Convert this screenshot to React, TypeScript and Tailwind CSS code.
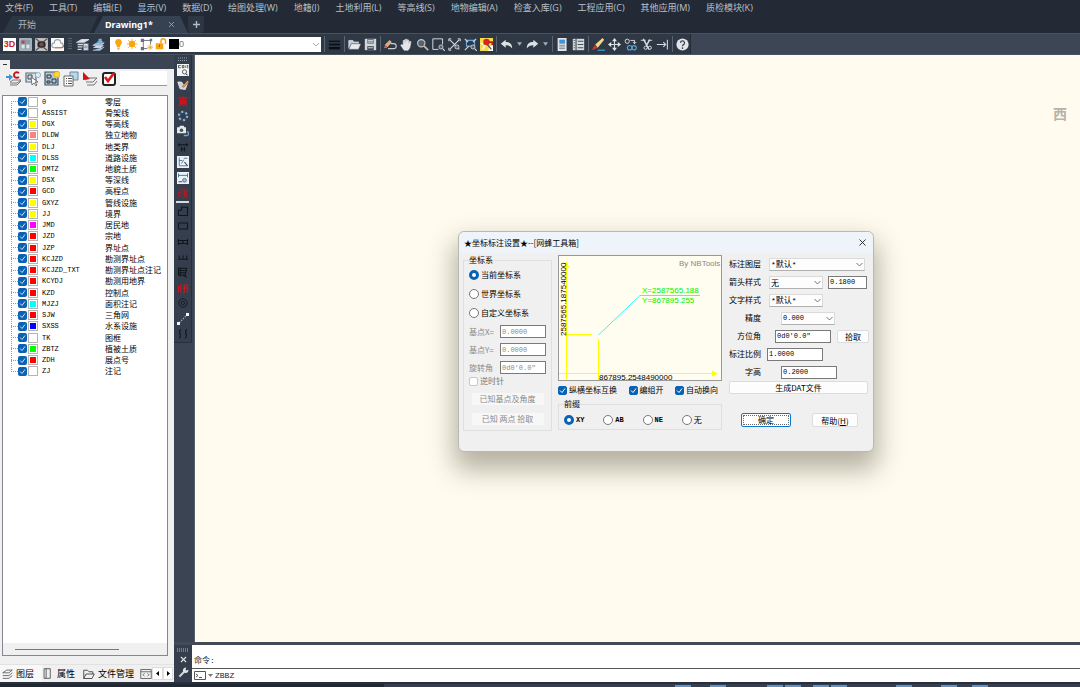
import type { ReactNode } from 'react'
import { X } from 'lucide-react'

const menus = [
  '文件(F)', '工具(T)', '编辑(E)', '显示(V)', '数据(D)', '绘图处理(W)', '地籍(J)',
  '土地利用(L)', '等高线(S)', '地物编辑(A)', '检查入库(G)', '工程应用(C)', '其他应用(M)', '质检模块(K)',
]

const layers = [
  { code: '0', name: '零层', color: '#ffffff' },
  { code: 'ASSIST', name: '骨架线', color: '#ffffff' },
  { code: 'DGX', name: '等高线', color: '#ffff00' },
  { code: 'DLDW', name: '独立地物', color: '#ff7f7f' },
  { code: 'DLJ', name: '地类界', color: '#ffff00' },
  { code: 'DLSS', name: '道路设施', color: '#00ffff' },
  { code: 'DMTZ', name: '地貌土质', color: '#00ff00' },
  { code: 'DSX', name: '等深线', color: '#ffff00' },
  { code: 'GCD', name: '高程点', color: '#ff0000' },
  { code: 'GXYZ', name: '管线设施', color: '#ffff00' },
  { code: 'JJ', name: '境界', color: '#ffff00' },
  { code: 'JMD', name: '居民地', color: '#ff00ff' },
  { code: 'JZD', name: '宗地', color: '#ff0000' },
  { code: 'JZP', name: '界址点', color: '#ff0000' },
  { code: 'KCJZD', name: '勘测界址点', color: '#ff0000' },
  { code: 'KCJZD_TXT', name: '勘测界址点注记', color: '#ff0000' },
  { code: 'KCYDJ', name: '勘测用地界', color: '#ff0000' },
  { code: 'KZD', name: '控制点', color: '#ff0000' },
  { code: 'MJZJ', name: '面积注记', color: '#00ffff' },
  { code: 'SJW', name: '三角网', color: '#ff0000' },
  { code: 'SXSS', name: '水系设施', color: '#0000ff' },
  { code: 'TK', name: '图框', color: '#ffffff' },
  { code: 'ZBTZ', name: '植被土质', color: '#00ff00' },
  { code: 'ZDH', name: '展点号', color: '#ff0000' },
  { code: 'ZJ', name: '注记', color: '#ffffff' },
]

function Icon({ children, size = 13 }: { children: ReactNode; size?: number }) {
  return (
    <svg width={size} height={size} viewBox="0 0 16 16" fill="none" stroke="#d5dae0" strokeWidth="1.4" className="shrink-0">
      {children}
    </svg>
  )
}

function IconButton({ label, children, size }: { label: string; children: ReactNode; size?: number }) {
  return (
    <button type="button" aria-label={label} className="flex shrink-0 items-center justify-center">
      <Icon size={size}>{children}</Icon>
    </button>
  )
}

function Sep() {
  return <span className="h-4 w-px shrink-0 bg-[#5a6473]" />
}

function Dropdown() {
  return (
    <svg width="5" height="4" viewBox="0 0 6 4" className="mx-px shrink-0">
      <path d="M0 0h6L3 4z" fill="#9fb0c0" />
    </svg>
  )
}

function MenuBar() {
  return (
    <nav className="flex h-4 shrink-0 items-center gap-4 overflow-hidden px-[5px] font-['Open_Sans','Noto_Sans_CJK_SC'] text-[9px] leading-4 text-[#b9c0c9]">
      {menus.map((m) => (
        <button key={m} type="button" className="shrink-0 whitespace-nowrap">{m}</button>
      ))}
    </nav>
  )
}

function TabBar() {
  return (
    <div className="flex h-[17px] shrink-0 items-stretch">
      <button type="button" className="w-[98px] bg-[#2d3744] pl-[18px] text-left text-[9px] leading-4 text-[#aab2bc] [clip-path:polygon(12px_0,100%_0,90px_100%,3px_100%)]">
        开始
      </button>
      <div className="-ml-1 flex w-[94px] items-center justify-between bg-[#364252] pr-3 pl-[11px] [clip-path:polygon(9px_0,86px_0,100%_100%,0_100%)]">
        <button type="button" className="font-['Noto_Sans'] text-[9px] leading-4 font-bold text-white">Drawing1*</button>
        <button type="button" aria-label="关闭"><X size={9} color="#aeb6c0" /></button>
      </div>
      <button type="button" aria-label="新建" className="flex w-4 items-center justify-center rounded-b bg-[#2d3744]">
        <svg width="7" height="7" viewBox="0 0 7 7"><path d="M3.5 0v7M0 3.5h7" stroke="#b5bcc6" strokeWidth="1.4" /></svg>
      </button>
    </div>
  )
}

function Toolbar() {
  return (
    <div className="flex h-[22px] shrink-0 border-y border-[#48525f] bg-[#3c4655]">
      <div className="flex shrink-0 items-center gap-[3px] border-r border-[#252c37] bg-[#2f3845] pr-px pl-[3px]">
        <button type="button" className="h-[13px] w-[13px] bg-white font-['Liberation_Sans'] text-[9px] leading-[13px] font-bold text-[#d21c24]">3D</button>
        <IconButton label="视图">
          <rect x="1" y="1" width="14" height="14" fill="#8b949e" stroke="#cfd4da" />
          <circle cx="5" cy="5" r="2" fill="#b84450" stroke="none" /><circle cx="11" cy="5" r="2" fill="#74a7c8" stroke="none" />
          <path d="M3 8h4v5H3zM9 8h4v5H9z" fill="#dde3e8" stroke="none" />
        </IconButton>
        <IconButton label="影像">
          <rect x="1" y="1" width="14" height="14" fill="#b7b5b5" stroke="#ddd" />
          <rect x="3" y="4" width="10" height="8" rx="3" fill="#2d2a2c" stroke="none" />
          <circle cx="8" cy="8" r="2.6" fill="#7c4a4a" stroke="none" />
          <path d="M1 1l4 3M15 1l-4 3M1 15l4-3M15 15l-4-3" stroke="#555" />
        </IconButton>
        <IconButton label="云">
          <rect width="16" height="16" fill="#fafafa" stroke="none" />
          <path d="M4 12a3 3 0 0 1 0-6 4 4 0 0 1 8 0 3 3 0 0 1 0 6z" stroke="#9aa0a8" />
          <path d="M5 12h8a2 2 0 0 0 2-3" stroke="#df6a3c" />
        </IconButton>
        <svg width="4" height="12" viewBox="0 0 4 12" className="mx-px"><path d="M1 0v12M3 0v12" stroke="#8a939f" strokeDasharray="1 1.5" /></svg>
        <IconButton label="图层特性">
          <path d="M2 5l5-3h8l-5 3zM2 8h7M2 11h6M2 14h5" fill="#e6e9ec" strokeWidth="1.6" />
          <rect x="9" y="7" width="6" height="8" fill="#e8edf2" stroke="#6c7784" strokeWidth="1" />
          <path d="M10 10h4M10 12h4" stroke="#4c6f92" strokeWidth="1" />
        </IconButton>
        <IconButton label="图层工具">
          <path d="M1 12l5-3h9l-5 4z" fill="#cfd4da" stroke="none" />
          <path d="M1 9l5-3h9l-5 4zM1 15l9 0 5-4" fill="#8ebde2" stroke="#d8e4ee" strokeWidth=".8" />
          <path d="M8 1h4v3h2l-4 4-4-4h2z" fill="#79b1dd" stroke="none" />
        </IconButton>
        <div className="relative ml-[2px] h-[15px] w-[211px]">
          <select aria-label="当前图层" className="block h-full w-full appearance-none bg-white pl-[69px] font-['Liberation_Sans'] text-[9px] leading-[15px] text-[#777]">
            <option>0</option>
          </select>
          <div className="pointer-events-none absolute inset-0 flex items-center gap-[2px] pl-[3px]">
            <Icon size={11}>
              <path d="M8 0a5 5 0 0 0-3 9l1 3h4l1-3a5 5 0 0 0-3-9z" fill="#f8a511" stroke="none" />
              <path d="M6 13.500h4M7 15.500h2" stroke="#f5a623" />
            </Icon>
            <Icon size={12}>
              <circle cx="8" cy="8" r="4.200" fill="#f8a511" stroke="none" />
              <path d="M8 1v14M1 8h14M3 3l10 10M13 3L3 13" stroke="#f8a511" strokeWidth="1.200" />
            </Icon>
            <Icon>
              <path d="M4 3h10M4 3v10M4 13h5M13 3v5" stroke="#555d66" strokeWidth="1" />
              <path d="M1 1h4v4H1zM12 1h3v3h-3zM1 11h4v4H1z" fill="#687078" stroke="none" />
              <path d="M12.500 8v7M9 11.500h7M10 9l5 5M15 9l-5 5" stroke="#f8a511" strokeWidth="1" />
            </Icon>
            <Icon size={12}>
              <rect x="1" y="7" width="10" height="8" fill="#f8a511" stroke="none" />
              <path d="M8 7V4a3 3 0 0 1 6 0v4" stroke="#f8a511" strokeWidth="2" />
              <path d="M6 9v3" stroke="#a35c00" />
            </Icon>
            <span className="h-[10px] w-[10px] bg-black" />
          </div>
          <svg width="6" height="4" viewBox="0 0 6 4" className="pointer-events-none absolute top-[6px] right-[2px]"><path d="M0 0l3 3 3-3" stroke="#aaa" fill="none" /></svg>
        </div>
        <Sep />
        <IconButton label="线型"><path d="M1 4h14" stroke="#0c1016" strokeWidth="1.500" /><path d="M1 8h14" stroke="#0c1016" strokeWidth="2.200" /><path d="M1 12.500h14" stroke="#0c1016" strokeWidth="3" /></IconButton>
        <Sep />
        <IconButton label="打开"><path d="M1 13V3h5l1 2h6v2" fill="#c6ccd2" strokeWidth="1" /><path d="M1 14l3-7h12l-3 7z" fill="#e8ebee" stroke="#39424f" strokeWidth=".7" /></IconButton>
        <IconButton label="保存"><path d="M1 1h14v14H1z" fill="#d3d7dc" stroke="none" /><path d="M4 1h8v6H4z" fill="#6a7480" stroke="none" /><path d="M4 10h8v5H4z" fill="#434d5a" stroke="none" /><path d="M5 3h6M5 5h6M5 12h6" stroke="#e6e9ec" strokeWidth="1" /></IconButton>
        <Sep />
        <IconButton label="绘制"><path d="M8 7h4a3 3 0 0 1 0 6H5" stroke="#c8cdd3" /><path d="M1 12l1-4 5-5 2 2-5 6z" fill="#e8a46a" stroke="#f1d9c3" strokeWidth=".8" /><path d="M1 12l1-3 2 2z" fill="#c33" stroke="none" /></IconButton>
        <IconButton label="平移"><path d="M5 15L1 9l1-1 2 1V3l1.500-.5L6.500 7V1.500H8V7l1-5 1.500.4V8L12 4l1.500.5L12 12l-2 3z" fill="#e4e7ea" stroke="#e4e7ea" strokeWidth=".8" /></IconButton>
        <IconButton label="缩放"><circle cx="6.500" cy="6.500" r="4.500" fill="#59636f" stroke="#c3c9d0" /><path d="M10 10l5 5" stroke="#d5b79a" strokeWidth="2" /></IconButton>
        <IconButton label="窗口缩放"><path d="M8 14H1V1h12v7" strokeWidth="1.200" /><circle cx="11" cy="11" r="2.500" fill="#566" strokeWidth="1" /><path d="M13 13l3 3" /></IconButton>
        <IconButton label="范围缩放"><path d="M2 2l12 12M14 2L2 14" /><path d="M1 4V1h3M12 1h3v3M1 12v3h3" strokeWidth="1.200" /><circle cx="11" cy="11" r="2.500" fill="#566" strokeWidth="1" /></IconButton>
        <IconButton label="对象缩放"><path d="M3 3h10v7H3z" stroke="#67a6d6" /><path d="M1 1l4 4M15 1l-4 4M1 15l5-5" /><circle cx="11" cy="11" r="2.500" fill="#566" strokeWidth="1" /><path d="M13 13l3 3" /></IconButton>
        <IconButton label="查询"><path d="M0 0h16v16H0z" fill="#f6dc4a" stroke="none" /><path d="M10 16c1-5 3-7 6-8v8z" fill="#fff" stroke="none" /><path d="M3 14l4-6M1 6l3 2" stroke="#f2f7ff" strokeWidth="2" /><circle cx="8" cy="5" r="4" fill="#d7281e" stroke="none" /><path d="M10 5h5v4" stroke="#c81d1d" strokeWidth="2" /><path d="M9 8l5 6" stroke="#555" strokeWidth="1.600" /></IconButton>
        <Sep />
        <IconButton label="放弃"><path d="M1 7l6-5v3c5 0 8 2 8 8-2-3-4-4-8-4v3z" fill="#dde1e5" stroke="none" /></IconButton>
        <Dropdown />
        <IconButton label="重做"><path d="M15 7L9 2v3C4 5 1 7 1 13c2-3 4-4 8-4v3z" fill="#dde1e5" stroke="none" /></IconButton>
        <Dropdown />
        <Sep />
        <IconButton label="特性"><path d="M2 0h11v16H2z" fill="#dfe5ea" stroke="none" /><path d="M4 2h7v5H4z" fill="#3d96d3" stroke="none" /><path d="M4 9h7M4 11h7M4 13h7" stroke="#6f7c89" strokeWidth="1" /></IconButton>
        <IconButton label="工具选项板"><path d="M1 1h14v14H1z" fill="#d7dce1" stroke="none" /><path d="M5 1v14M7 4h7M7 8h7M7 12h7" stroke="#46505d" /><path d="M2 3h2M2 6h2M2 9h2M2 12h2" stroke="#46505d" strokeWidth="1" /></IconButton>
        <Sep />
        <IconButton label="特性匹配"><path d="M7 15h9" stroke="#48a0dd" /><path d="M0 15l3-6 4 3z" fill="#d8362a" stroke="none" /><path d="M4 8l9-8 2 2-8 10z" fill="#f2d58a" stroke="none" /></IconButton>
        <IconButton label="移动"><path d="M8 2v12M2 8h12" /><path d="M8 0l3 4H5zM8 16l3-4H5zM0 8l4-3v6zM16 8l-4-3v6z" fill="#e4e7ea" stroke="none" /></IconButton>
        <IconButton label="复制"><circle cx="4" cy="4" r="2.600" strokeWidth="1.200" /><path d="M8 3h5v4M11 5l2 2 2-2" strokeWidth="1.200" /><circle cx="7" cy="12" r="2.800" stroke="#56a5da" /><circle cx="12.500" cy="12" r="2.600" stroke="#56a5da" /></IconButton>
        <IconButton label="修剪"><path d="M1 3h6M10 3h5" stroke="#aab1ba" /><path d="M4 1l7 13M12 2L8 9" strokeWidth="1.800" /><circle cx="7" cy="12" r="2" strokeWidth="1.200" /><circle cx="12" cy="12" r="2" strokeWidth="1.200" /></IconButton>
        <IconButton label="延伸"><path d="M1 8h11M14 2v12M9 5l3 3-3 3" strokeWidth="1.300" /></IconButton>
        <Sep />
        <IconButton label="帮助"><circle cx="8" cy="8" r="7.500" fill="#e2e5e9" stroke="none" /><path d="M5.500 6a2.500 2.500 0 1 1 3.700 2.200C8.300 8.700 8 9 8 10M8 11.500v2" stroke="#434d5a" strokeWidth="1.600" /></IconButton>
      </div>
    </div>
  )
}

function Check({ label, className = '', disabled = false }: { label: string; className?: string; disabled?: boolean }) {
  return (
    <label className={`flex items-center gap-[2px] whitespace-nowrap ${className}`}>
      <span className="relative h-[9px] w-[9px] shrink-0">
        <input type="checkbox" defaultChecked={!disabled} disabled={disabled} className="peer block h-[9px] w-[9px] appearance-none rounded-xs border border-[#c8c8c8] bg-white checked:border-[#0a62b4] checked:bg-[#0a62b4]" />
        <svg viewBox="0 0 9 9" className="pointer-events-none absolute inset-0 hidden peer-checked:block"><path d="M2 4.500l2 2 3-4" stroke="#fff" fill="none" /></svg>
      </span>
      {label}
    </label>
  )
}

function LayerTree() {
  return (
    <div className="mr-[6px] ml-[2px] flex min-h-0 flex-1 flex-col border border-[#828790] bg-white">
      <ul className="relative grid h-[281px]">
        <li aria-hidden="true" className="absolute top-[5px] bottom-[5px] left-2 border-l border-dotted border-[#999]" />
        {layers.map((l) => (
          <li key={l.code} className="flex items-center pl-2">
            <span className="w-[7px] border-t border-dotted border-[#999]" />
            <label className="flex flex-1 items-center">
              <span className="relative h-[9px] w-[9px]">
                <input type="checkbox" defaultChecked className="block h-[9px] w-[9px] appearance-none rounded-xs bg-white checked:bg-[#0a62b4]" />
                <svg viewBox="0 0 9 9" className="pointer-events-none absolute inset-0"><path d="M2 4.500l2 2 3-4" stroke="#cfe2f5" fill="none" /></svg>
              </span>
              <span className="ml-px h-[10px] w-[10px] border border-[#b4b4b4] p-px">
                <span className="block h-full w-full" style={{ backgroundColor: l.color }} />
              </span>
              <span className="ml-1 w-[63px] font-['Liberation_Mono'] text-[7px] leading-[10px] font-medium">{l.code}</span>
              <span className="text-[8px] leading-[10px] whitespace-nowrap">{l.name}</span>
            </label>
          </li>
        ))}
      </ul>
      <div className="mt-auto flex h-3 items-center bg-[#f0f0f0] pl-3">
        <span className="h-px w-[104px] bg-[#777]" />
      </div>
    </div>
  )
}

function LayerPanel() {
  return (
    <aside className="flex w-[174px] shrink-0 flex-col bg-[#f0f0f0]">
      <div className="flex h-[14px] items-end bg-[#3a4453]">
        <button type="button" aria-label="收起" className="flex h-[9px] w-[10px] items-center justify-center bg-[#f0f0f0]">
          <span className="h-px w-1 bg-[#333]" />
        </button>
      </div>
      <div className="flex h-[26px] items-start gap-[3px] pt-[2px] pl-[6px]">
        <IconButton label="设为当前" size={16}>
          <path d="M0 5h3V3l4 3-4 4V7H0z" fill="#3e93da" stroke="none" /><path d="M13 2c-3-2-5 0-5 2s2 4 5 2" stroke="#c3161c" strokeWidth="2" />
          <path d="M4 11l3-2h8l-4 3H4M4 14h7l4-4" stroke="#777" strokeWidth="1" fill="#eee" />
        </IconButton>
        <IconButton label="选择图层" size={16}>
          <path d="M1 2h10v9H1z" stroke="#5e6c7a" strokeWidth="1.200" fill="#dce3e8" /><path d="M3 4h4v4H3z" stroke="#345" strokeWidth="1" />
          <path d="M6 6l1 8 2-2 2 3 1-1-2-3h3z" fill="#fff" stroke="#555" strokeWidth=".8" /><circle cx="13" cy="4" r="2.600" fill="#d9ebfb" stroke="#8ba9c4" strokeWidth=".8" />
        </IconButton>
        <IconButton label="显示图层" size={16}>
          <path d="M1 1h13v13H1z" stroke="#456" strokeWidth="1.200" fill="#b9c7ce" /><path d="M3 4h4v3H3zM8 8h4v4H8zM3 10h3v2H3z" stroke="#234" strokeWidth="1" />
          <circle cx="13" cy="3.500" r="3" fill="#ffd83a" stroke="#e0a800" strokeWidth=".7" />
        </IconButton>
        <IconButton label="图层列表" size={16}>
          <path d="M7 1h8v8H7z" stroke="#6b8ba4" strokeWidth="1" fill="#b7d9ee" /><path d="M1 5h9v10H1z" stroke="#666" strokeWidth="1" fill="#fff" /><path d="M3 7.500h1M5 7.500h4M3 10h1M5 10h4M3 12.500h1M5 12.500h4" stroke="#555" strokeWidth="1" />
        </IconButton>
        <IconButton label="冻结图层" size={16}>
          <path d="M3 9l4-2h8l-4 4H4M5 14h7l3-4" stroke="#777" strokeWidth="1" fill="#eee" /><path d="M1 9V1l7 7z" fill="#c8141c" stroke="none" />
        </IconButton>
        <IconButton label="全选" size={16}>
          <rect x="2" y="2" width="12" height="12" rx="2" stroke="#222" strokeWidth="2" fill="#fff" /><path d="M4 6l3 4 6-8" stroke="#e0161c" strokeWidth="2.600" />
        </IconButton>
        <input aria-label="搜索图层" className="h-[15px] w-[47px] border-b border-[#999] bg-white text-[8px]" />
      </div>
      <LayerTree />
      <div className="mt-2 flex h-[18px] items-center overflow-hidden border-t border-[#e2e2e2] text-[9px] leading-4 whitespace-nowrap">
        <button type="button" className="flex h-full items-center gap-[3px] bg-[#f8f8f8] px-[2px] pr-2">
          <Icon size={11}><path d="M1 7l6-4h8l-5 4zM1 11h9l5-4M1 15h9l5-4" stroke="#555" strokeWidth="1.200" /></Icon>图层
        </button>
        <button type="button" className="flex items-center gap-1 pr-2">
          <Icon size={11}><path d="M3 1h9v14H3zM6 1v14" stroke="#444" strokeWidth="1.200" /></Icon>属性
        </button>
        <button type="button" className="flex items-center gap-[3px] pr-[6px]">
          <Icon size={12}><path d="M1 14V3h5l2 2h5v3M1 14l3-6h11l-3 6z" stroke="#444" strokeWidth="1.200" /></Icon>文件管理
        </button>
        <button type="button" aria-label="代码">
          <Icon size={12}><path d="M1 2h14v12H1zM1 5h14M6 7l-2 2 2 2M10 7l2 2-2 2" stroke="#555" strokeWidth="1.100" /></Icon>
        </button>
        <button type="button" aria-label="上一个" className="flex h-[13px] w-[11px] shrink-0 items-center justify-center border border-[#ddd] bg-white">
          <svg width="3" height="5" viewBox="0 0 3 5"><path d="M3 0v5L0 2.500z" /></svg>
        </button>
        <button type="button" aria-label="下一个" className="flex h-[13px] w-[10px] shrink-0 items-center justify-center border border-[#ddd] bg-white">
          <svg width="3" height="5" viewBox="0 0 3 5"><path d="M0 0v5l3-2.500z" /></svg>
        </button>
      </div>
    </aside>
  )
}

const dark = '#11161d'

function SideToolbar() {
  return (
    <div className="flex w-[21px] shrink-0 flex-col border-r border-[#56606d] bg-[#3a4453] pr-[2px]">
      <div className="flex flex-col border-r border-b border-[#28303c] bg-[#343e4c]">
        <svg width="10" height="5" viewBox="0 0 10 5" className="mx-auto mt-[2px]"><path d="M0 1h10M0 3.500h10" stroke="#98a1ac" strokeDasharray="1 1" /></svg>
        <div className="grid h-[139px] place-items-center">
          <IconButton label="编码查询" size={12}><path d="M0 0h16v16H0z" fill="#f3f5f7" stroke="none" /><path d="M2 2h3M2 2v3h3M7 2h2v3H7zM11 2v3M13 2h2M13 5h2M13 3.500h2" stroke="#333" strokeWidth="1" /><circle cx="10" cy="10.500" r="2.800" stroke="#333" strokeWidth="1" /><path d="M12 13l2 2" stroke="#333" /></IconButton>
          <IconButton label="标注" size={12}><path d="M1 4l3 9 7 1 3-8-5 2-3-4z" fill="#cfd3d7" stroke="#eee" strokeWidth="1" /><path d="M7 10l7-8 2 2-7 7z" fill="#e9a53e" stroke="#633" strokeWidth=".6" /></IconButton>
          <IconButton label="重构" size={12}><path d="M2 4h12M8 1v14M4 7h8v4H4zM2 15l4-3M14 15l-4-3M4 9h8" stroke="#c9141c" strokeWidth="1.700" /></IconButton>
          <IconButton label="多边形" size={12}><circle cx="8" cy="8" r="5.500" stroke="#4d6b8c" strokeWidth="1" /><circle cx="8" cy="8" r="5.500" stroke="#87b5dc" strokeWidth="3" strokeDasharray="2.500 3.260" /></IconButton>
          <IconButton label="拍照" size={12}><path d="M0 3h3l1-2h5l1 2h2v8H0z" fill="#e5e8ea" stroke="none" /><circle cx="6" cy="7" r="2.300" fill="#48525e" stroke="none" /><path d="M9 14h4a2 2 0 0 0 0-5" stroke="#72a8d4" strokeWidth="1.800" /></IconButton>
          <IconButton label="尺寸" size={12}><path d="M1 5h14M3 3v4M13 3v4M6 8v6M10 8v6M6 11h4" stroke={dark} strokeWidth="1.500" /></IconButton>
          <IconButton label="坐标" size={12}><path d="M0 0h16v16H0z" fill="#edf2f7" stroke="none" /><path d="M3 2v11h11M3 6h4M6 10l3-5M9 3h5" stroke="#4576a6" strokeWidth="1.200" /><path d="M10 8l4 5" stroke="#333" /></IconButton>
          <IconButton label="距离" size={12}><path d="M0 0h16v16H0z" fill="#edf2f7" stroke="none" /><path d="M2 2v5M14 2v5M2 4.500h12" stroke="#4576a6" strokeWidth="1.300" /><circle cx="10" cy="11" r="2.500" fill="#9cc3e5" stroke="#456" strokeWidth="1" /><path d="M2 13h5" stroke="#555" /></IconButton>
          <IconButton label="改注" size={12}><path d="M2 3h4v4H2v4M7 2l7 2M8 5l6 1-6 3 7 1M10 2v12M2 14l5-4M8 14l6-4M13 12v3" stroke="#a91d27" strokeWidth="1.500" /></IconButton>
        </div>
        <span className="mx-[2px] h-[2px] bg-[#d6dade]" />
        <div className="grid h-[139px] place-items-center">
          <IconButton label="房屋" size={12}><path d="M2 14V7h4V3h8v11z" stroke={dark} /></IconButton>
          <IconButton label="矩形" size={12}><path d="M2 4h12v8H2z" stroke={dark} /></IconButton>
          <IconButton label="围墙" size={12}><path d="M1 6h14M1 10h14M2 4v8M8 6v4M14 4v8" stroke={dark} /></IconButton>
          <IconButton label="陡坎" size={12}><path d="M1 11h14M3 6v5M8 6v5M13 6v5" stroke={dark} /></IconButton>
          <IconButton label="台阶" size={12}><path d="M2 3h11l-2 9H2zM4 6h8M3 9h9M8 12l5 3M4 3v11" stroke={dark} /></IconButton>
          <IconButton label="植被" size={12}><path d="M2 5v9M5 3v11M2 8h4M8 5l6-2M8 8h7M10 4v10M14 3v11M8 14h2" stroke="#c21a22" strokeWidth="1.700" /></IconButton>
          <IconButton label="控制点" size={12}><circle cx="8" cy="8" r="5.500" stroke={dark} strokeWidth="1.200" /><circle cx="8" cy="8" r="2.200" stroke={dark} strokeWidth="1" /></IconButton>
          <IconButton label="连线" size={12}><path d="M3 13L13 3" stroke="#8ab7df" strokeDasharray="2 1.500" /><path d="M0 12h4v4H0zM12 0h4v4h-4z" fill="#f4f6f8" stroke="none" /></IconButton>
          <IconButton label="曲线" size={12}><path d="M5 2c-5 4 3 6-2 12M13 2c-5 4 3 6-2 12" stroke={dark} /></IconButton>
        </div>
      </div>
    </div>
  )
}

const fieldBox = "h-[13px] border border-[#7a7a7a] bg-white px-px font-['Liberation_Mono'] text-[7px] leading-[11px]"
const pushButton = 'rounded-xs border border-[#dcdcdc] bg-[#fdfdfd] text-center text-[8px] leading-[11px] whitespace-nowrap'

function Radio({ name, label, checked = false, mono = false }: { name: string; label: string; checked?: boolean; mono?: boolean }) {
  return (
    <label className={`flex items-center gap-[2px] whitespace-nowrap ${mono ? "font-['Liberation_Mono','Noto_Sans_CJK_SC'] font-bold" : ''}`}>
      <input type="radio" name={name} defaultChecked={checked} className="h-[10px] w-[10px] appearance-none rounded-full border border-[#777] bg-white checked:border-[3px] checked:border-[#0a62b4]" />
      {mono ? <span className="text-[7px]">{label}</span> : label}
    </label>
  )
}

function Select({ label, value, className }: { label: string; value: string; className: string }) {
  return (
    <div className={`relative h-[13px] ${className}`}>
      <select aria-label={label} defaultValue={value} className="block h-full w-full appearance-none border border-[#dadada] border-b-[#b0b0b0] bg-[#fdfdfd] pl-px leading-[11px]">
        <option>{value}</option>
      </select>
      <svg width="7" height="5" viewBox="0 0 7 5" className="pointer-events-none absolute top-1 right-[2px]"><path d="M.5 1l3 3 3-3" stroke="#777" fill="none" /></svg>
    </div>
  )
}

function Row({ label, gap, children }: { label: string; gap: string; children: ReactNode }) {
  return (
    <div className="flex h-[18px] items-center">
      <span className={`w-[33px] shrink-0 text-right whitespace-nowrap ${gap}`}>{label}</span>
      {children}
    </div>
  )
}

function CoordinateGroup() {
  const fields = [
    { label: '基点X=', value: '0.0000' },
    { label: '基点Y=', value: '0.0000' },
    { label: '旋转角', value: '0d0\'0.0"' },
  ]
  return (
    <fieldset className="w-[88px] shrink-0 border border-[#dfdfdf] px-[5px] pb-[5px]">
      <legend className="leading-[10px]">坐标系</legend>
      <div className="mt-[5px] flex flex-col gap-[9px] leading-[10px]">
        <Radio name="cs" label="当前坐标系" checked />
        <Radio name="cs" label="世界坐标系" />
        <Radio name="cs" label="自定义坐标系" />
      </div>
      <div className="mt-[7px] flex flex-col gap-[5px] text-[#8a8a8a]">
        {fields.map((f) => (
          <label key={f.label} className="flex items-center leading-[13px] whitespace-nowrap">
            <span className="w-[31px] shrink-0">{f.label}</span>
            <input disabled defaultValue={f.value} className={`w-[46px] bg-[#f0f0f0] ${fieldBox}`} />
          </label>
        ))}
      </div>
      <Check label="逆时针" disabled className="mt-[2px] leading-[10px] text-[#777]" />
      <div className="mt-[7px] flex flex-col items-center gap-2 text-[#8a8a8a]">
        <button type="button" disabled className="h-3 w-[72px] bg-[#f7f7f7] text-[8px] leading-3 whitespace-nowrap">已知基点及角度</button>
        <button type="button" disabled className="h-3 w-[72px] bg-[#f7f7f7] text-[8px] leading-3 whitespace-nowrap">已知 两点 拾取</button>
      </div>
    </fieldset>
  )
}

function Preview() {
  return (
    <svg width="164" height="126" viewBox="0 0 164 126" className="bg-[#fffdf0] font-['Liberation_Sans'] text-[8px] outline-1 -outline-offset-1 outline-[#999]">
      <g fill="#ffff00" shapeRendering="crispEdges">
        <rect x="8" y="8" width="1" height="117" />
        <rect x="1" y="118" width="156" height="1" />
        <rect x="8" y="79" width="26" height="1" />
        <rect x="40" y="84" width="1" height="41" />
      </g>
      <path d="M6 12l2.500-6 2.500 6zM154 115.500l6 3-6 3z" fill="#ffff00" />
      <path d="M40.500 80L82 40.500h60" stroke="#2ff" fill="none" />
      <text x="121" y="11" fill="#888">By NBTools</text>
      <text x="84" y="38" fill="#0e0">X=2587565.188</text>
      <text x="84" y="48" fill="#0e0">Y=867895.255</text>
      <text x="41" y="125">867895.2548490000</text>
      <text transform="translate(8 81) rotate(-90)">2587565.187540000</text>
    </svg>
  )
}

function AnnotationDialog() {
  return (
    <section role="dialog" aria-label="坐标标注设置" className="absolute top-[176px] left-[263px] flex w-[416px] flex-col rounded-md border border-[#b9b9b4] bg-[#f0f0f0] text-[8px] leading-[10px] text-black shadow-[0_14px_26px_4px_rgba(60,60,40,0.38)]">
      <header className="flex h-[21px] items-center justify-between rounded-t-md bg-[#eef4fa] pr-[5px] pl-[5px]">
        <h1>★坐标标注设置★--[网蜂工具箱]</h1>
        <button type="button" aria-label="关闭"><X size={11} strokeWidth={2} color="#222" /></button>
      </header>
      <div className="flex gap-[6px] pt-[2px] pr-[5px] pb-[20px] pl-1">
        <CoordinateGroup />
        <div className="flex w-[164px] shrink-0 flex-col">
          <Preview />
          <div className="mt-1 flex justify-between pr-1">
            <Check label="纵横坐标互换" />
            <Check label="编组开" />
            <Check label="自动换向" />
          </div>
          <fieldset className="mt-1 border border-[#dfdfdf] pb-1 pl-[5px]">
            <legend className="leading-[10px]">前缀</legend>
            <div className="grid grid-cols-4 pt-[6px]">
              <Radio name="prefix" label="XY" checked mono />
              <Radio name="prefix" label="AB" mono />
              <Radio name="prefix" label="NE" mono />
              <Radio name="prefix" label="无" />
            </div>
          </fieldset>
        </div>
        <div className="flex flex-1 flex-col">
          <Row label="标注图层" gap="mr-[8px]">
            <Select label="标注图层" value="*默认*" className="w-24 font-['Liberation_Mono','Noto_Sans_CJK_SC'] text-[8px]" />
          </Row>
          <Row label="箭头样式" gap="mr-[8px]">
            <Select label="箭头样式" value="无" className="w-[54px] text-[8px]" />
            <input aria-label="箭头大小" defaultValue="0.1800" className={`ml-[5px] w-[39px] ${fieldBox}`} />
          </Row>
          <Row label="文字样式" gap="mr-[8px]">
            <Select label="文字样式" value="*默认*" className="w-[54px] font-['Liberation_Mono','Noto_Sans_CJK_SC'] text-[8px]" />
          </Row>
          <Row label="精度" gap="mr-[20px]">
            <Select label="精度" value="0.000" className="w-[54px] font-['Liberation_Mono'] text-[7px]" />
          </Row>
          <Row label="方位角" gap="mr-[14px]">
            <input aria-label="方位角" defaultValue={'0d0\'0.0"'} className={`w-[56px] ${fieldBox}`} />
            <button type="button" className={`ml-[6px] w-8 ${pushButton}`}>拾取</button>
          </Row>
          <Row label="标注比例" gap="mr-[6px]">
            <input aria-label="标注比例" defaultValue="1.0000" className={`w-[56px] ${fieldBox}`} />
          </Row>
          <Row label="字高" gap="mr-[20px]">
            <input aria-label="字高" defaultValue="0.2000" className={`w-[56px] ${fieldBox}`} />
          </Row>
          <button type="button" className={`mr-px ml-px ${pushButton}`}>生成DAT文件</button>
          <div className="mt-[19px] flex gap-[21px] pl-[13px]">
            <button type="button" className="flex h-[14px] w-[50px] rounded-xs border border-[#0a78d0] bg-white p-px text-[8px]">
              <span className="flex h-full w-full items-center justify-center border border-dotted border-[#666] leading-none">确定</span>
            </button>
            <button type="button" className={`h-[14px] w-[46px] ${pushButton}`}>帮助(<u>H</u>)</button>
          </div>
        </div>
      </div>
    </section>
  )
}

function CommandLine() {
  return (
    <div className="flex h-[40px] shrink-0 border-t-[3px] border-[#424b57]">
      <div className="flex w-[18px] shrink-0 flex-col items-center gap-[3px] bg-[#343e4c] pt-[3px]">
        <svg width="12" height="4" viewBox="0 0 12 4"><path d="M0 1h12M0 3h12" stroke="#b5bcc5" strokeDasharray="1 1" /></svg>
        <button type="button" aria-label="关闭命令行"><X size={9} strokeWidth={3} color="#dfe3e8" /></button>
        <button type="button" aria-label="自定义"><Icon size={11}><path d="M2 14l7-7" strokeWidth="3" /><path d="M15 4l-3 1-1-1 1-3a4 4 0 1 0 3 3z" fill="#dfe3e8" stroke="none" /></Icon></button>
      </div>
      <div className="flex flex-1 flex-col bg-white font-['Liberation_Mono','Noto_Sans_CJK_SC'] text-[8px] text-[#222]">
        <p className="flex flex-1 items-end border-b border-[#555] pb-[2px] pl-[2px] leading-[10px]">命令:</p>
        <label className="flex h-[13px] items-center gap-[2px] pl-[2px]">
          <svg width="12" height="9" viewBox="0 0 12 9"><path d="M.5.5h11v8H.5zM2 3l2 1.500L2 6M5 6.500h3" fill="none" stroke="#555" /></svg>
          <svg width="5" height="3" viewBox="0 0 5 3"><path d="M0 0h5L2.500 3z" fill="#777" /></svg>
          <input aria-label="命令" defaultValue="ZBBZ" className="h-3 flex-1 outline-none" />
        </label>
      </div>
    </div>
  )
}

function StatusBar() {
  const toggles = ['ml-0', 'ml-[19px]', 'ml-[41px]', 'ml-[2px]', 'ml-[12px]', 'ml-[2px]', 'ml-[49px]', 'ml-[29px]', 'ml-[15px]']
  return (
    <footer className="flex h-[5px] shrink-0 items-end border-t-2 border-[#27303c] bg-[#353f4d]">
      <span className="h-full w-[384px] bg-[#202833]" />
      <div className="ml-auto flex h-[2px] pr-[92px]">
        {toggles.map((m, i) => (
          <span key={i} className={`w-4 bg-[#6293c4] ${m}`} />
        ))}
      </div>
    </footer>
  )
}

export default function App() {
  return (
    <div className="flex h-screen flex-col overflow-hidden bg-[#232a35] font-['Noto_Sans_CJK_SC',sans-serif]">
      <MenuBar />
      <TabBar />
      <Toolbar />
      <div className="flex min-h-0 flex-1">
        <LayerPanel />
        <div className="flex min-w-0 flex-1 flex-col">
          <div className="flex min-h-0 flex-1">
            <SideToolbar />
            <main className="relative flex-1 overflow-hidden bg-[#fffbef]">
              <span className="absolute top-[50px] right-[13px] text-[14px] leading-4 font-bold text-[#b5b3aa]">西</span>
              <AnnotationDialog />
            </main>
          </div>
          <CommandLine />
        </div>
      </div>
      <StatusBar />
    </div>
  )
}
